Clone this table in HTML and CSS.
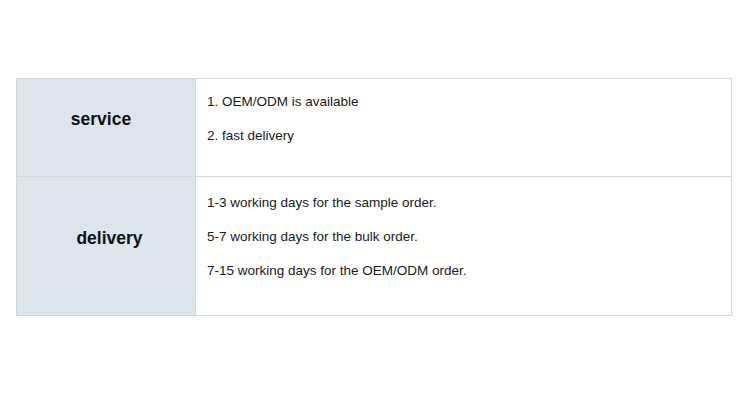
FILE: index.html
```html
<!DOCTYPE html>
<html>
<head>
<meta charset="utf-8">
<link rel="stylesheet" href="styles.css">
</head>
<body>
<div class="page">
  <table class="spec">
    <tr class="row-service">
      <th class="label label-service">service</th>
      <td class="value">
        <p>1. OEM/ODM is available</p>
        <p>2. fast delivery</p>
      </td>
    </tr>
    <tr class="row-delivery">
      <th class="label label-delivery">delivery</th>
      <td class="value">
        <p>1-3 working days for the sample order.</p>
        <p>5-7 working days for the bulk order.</p>
        <p>7-15 working days for the OEM/ODM order.</p>
      </td>
    </tr>
  </table>
</div>
</body>
</html>
```
FILE: styles.css
```css
html, body {
  margin: 0;
  padding: 0;
  background: #ffffff;
}
.page {
  padding: 78px 18px 0 16px;
  font-family: "Liberation Sans", Arial, sans-serif;
  color: #1a1a1a;
}
.spec {
  width: 716px;
  border-collapse: collapse;
  table-layout: fixed;
}
.spec th, .spec td {
  border: 1px solid #d6d6d6;
  vertical-align: middle;
}
.label {
  width: 178px;
  background: #dce4ed;
  font-size: 17.5px;
  font-weight: bold;
  color: #111;
  text-align: center;
  padding: 0 0 16px 0;
}
.label-service {
  text-indent: -10px;
}
.label-delivery {
  text-indent: 7px;
}
.value {
  padding: 0 12px 0 11px;
  font-size: 13.5px;
  line-height: 16px;
}
.value p {
  margin: 0 0 18px 0;
}
.row-service {
  height: 98px;
}
.row-delivery {
  height: 139px;
}
```
